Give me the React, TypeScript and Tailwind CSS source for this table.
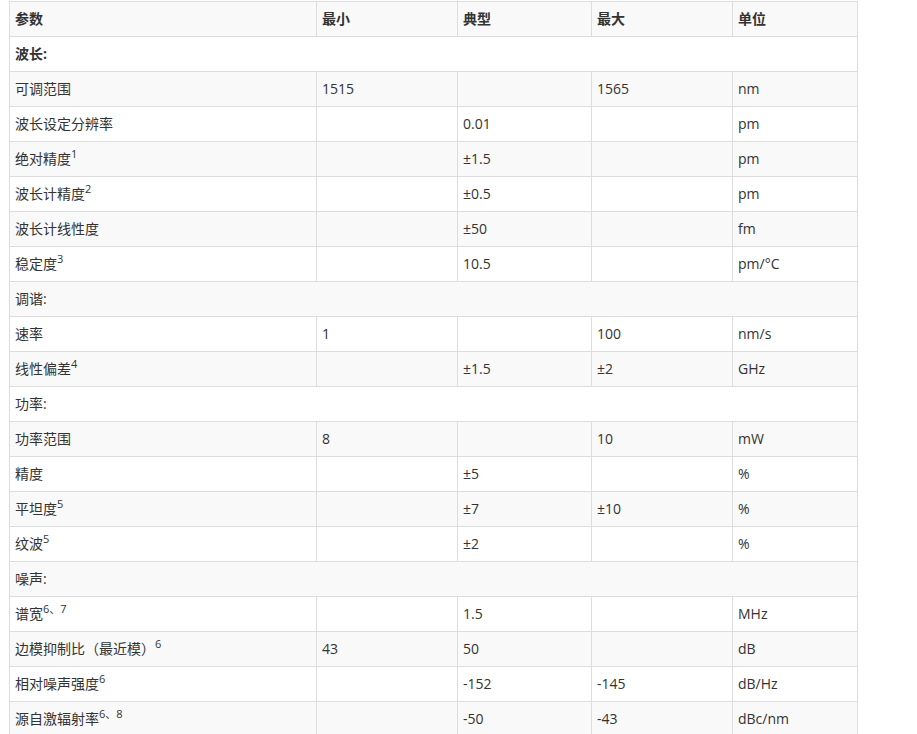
import React from 'react';

type Row =
  | { section: string; bold?: boolean }
  | { name: string; sup?: string; min?: string; typ?: string; max?: string; unit: string };

const rows: Row[] = [
  { section: '波长:', bold: true },
  { name: '可调范围', min: '1515', max: '1565', unit: 'nm' },
  { name: '波长设定分辨率', typ: '0.01', unit: 'pm' },
  { name: '绝对精度', sup: '1', typ: '±1.5', unit: 'pm' },
  { name: '波长计精度', sup: '2', typ: '±0.5', unit: 'pm' },
  { name: '波长计线性度', typ: '±50', unit: 'fm' },
  { name: '稳定度', sup: '3', typ: '10.5', unit: 'pm/°C' },
  { section: '调谐:' },
  { name: '速率', min: '1', max: '100', unit: 'nm/s' },
  { name: '线性偏差', sup: '4', typ: '±1.5', max: '±2', unit: 'GHz' },
  { section: '功率:' },
  { name: '功率范围', min: '8', max: '10', unit: 'mW' },
  { name: '精度', typ: '±5', unit: '%' },
  { name: '平坦度', sup: '5', typ: '±7', max: '±10', unit: '%' },
  { name: '纹波', sup: '5', typ: '±2', unit: '%' },
  { section: '噪声:' },
  { name: '谱宽', sup: '6、7', typ: '1.5', unit: 'MHz' },
  { name: '边模抑制比（最近模）', sup: '6', min: '43', typ: '50', unit: 'dB' },
  { name: '相对噪声强度', sup: '6', typ: '-152', max: '-145', unit: 'dB/Hz' },
  { name: '源自激辐射率', sup: '6、8', typ: '-50', max: '-43', unit: 'dBc/nm' },
];

const cell = 'h-[35px] border border-[#dddddd] px-[5px] pt-0 pb-[2px] align-middle';

export default function App() {
  return (
    <div className="bg-white pl-[9px] pt-[1px] text-[14px] text-[#333333] [font-family:'Open_Sans','Noto_Sans_CJK_SC',sans-serif]">
      <table className="w-[848px] table-fixed border-collapse">
        <colgroup>
          <col className="w-[307px]" />
          <col className="w-[141px]" />
          <col className="w-[134px]" />
          <col className="w-[141px]" />
          <col className="w-[125px]" />
        </colgroup>
        <thead>
          <tr className="bg-[#f9f9f9] font-bold">
            <th className={`${cell} text-left`}>参数</th>
            <th className={`${cell} text-left`}>最小</th>
            <th className={`${cell} text-left`}>典型</th>
            <th className={`${cell} text-left`}>最大</th>
            <th className={`${cell} text-left`}>单位</th>
          </tr>
        </thead>
        <tbody>
          {rows.map((r, i) => {
            const bg = i % 2 === 0 ? 'bg-white' : 'bg-[#f9f9f9]';
            if ('section' in r) {
              return (
                <tr key={i} className={bg}>
                  <td colSpan={5} className={`${cell} ${r.bold ? 'font-bold' : ''}`}>{r.section}</td>
                </tr>
              );
            }
            return (
              <tr key={i} className={bg}>
                <td className={cell}>
                  {r.name}
                  {r.sup && <sup className="text-[11px]">{r.sup}</sup>}
                </td>
                <td className={cell}>{r.min}</td>
                <td className={cell}>{r.typ}</td>
                <td className={cell}>{r.max}</td>
                <td className={cell}>{r.unit}</td>
              </tr>
            );
          })}
        </tbody>
      </table>
    </div>
  );
}
